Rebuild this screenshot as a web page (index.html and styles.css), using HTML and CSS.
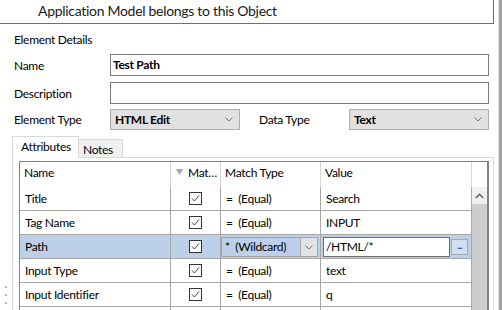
FILE: index.html
```html
<!DOCTYPE html>
<html>
<head>
<meta charset="utf-8">
<link rel="stylesheet" href="styles.css">
</head>
<body>
<div class="window">
  <div class="main">
    <div class="titlebar">Application Model belongs to this Object</div>
    <div class="content">
      <div class="section-title">Element Details</div>
      <div class="form">
        <div class="row">
          <span class="label">Name</span>
          <div class="textbox">Test Path</div>
        </div>
        <div class="row">
          <span class="label">Description</span>
          <div class="textbox"></div>
        </div>
        <div class="row types">
          <span class="label">Element Type</span>
          <div class="combo combo-type"><span>HTML Edit</span><svg class="chev" width="8" height="5" viewBox="0 0 8 5"><polyline points="0.5,0.5 4,4 7.5,0.5" fill="none" stroke="#6d6d6d" stroke-width="1"/></svg></div>
          <span class="label label-dt">Data Type</span>
          <div class="combo combo-dt"><span>Text</span><svg class="chev" width="8" height="5" viewBox="0 0 8 5"><polyline points="0.5,0.5 4,4 7.5,0.5" fill="none" stroke="#6d6d6d" stroke-width="1"/></svg></div>
        </div>
      </div>
      <div class="tabs">
        <div class="tab active">Attributes</div>
        <div class="tab">Notes</div>
      </div>
      <div class="tabpage">
        <div class="grid">
          <div class="ghead">
            <div class="hc c-name">Name</div>
            <div class="hc c-mat"><svg class="filter" width="7" height="6" viewBox="0 0 7 6"><polygon points="0,0 7,0 3.5,6" fill="#a6a6a6"/></svg>Mat…</div>
            <div class="hc c-match">Match Type</div>
            <div class="hc c-val">Value</div>
            <div class="hc c-sb"></div>
          </div>
          <div class="gbody">
            <div class="rows">
              <div class="grow">
                <div class="bc c-name">Title</div>
                <div class="bc c-mat"><span class="check"><svg width="11" height="11" viewBox="0 0 11 11"><polyline points="2,5.5 4.5,8 9,2.5" fill="none" stroke="#444" stroke-width="1"/></svg></span></div>
                <div class="bc c-match">=  (Equal)</div>
                <div class="bc c-val">Search</div>
              </div>
              <div class="grow">
                <div class="bc c-name">Tag Name</div>
                <div class="bc c-mat"><span class="check"><svg width="11" height="11" viewBox="0 0 11 11"><polyline points="2,5.5 4.5,8 9,2.5" fill="none" stroke="#444" stroke-width="1"/></svg></span></div>
                <div class="bc c-match">=  (Equal)</div>
                <div class="bc c-val">INPUT</div>
              </div>
              <div class="grow selected">
                <div class="bc c-name">Path</div>
                <div class="bc c-mat"><span class="check"><svg width="11" height="11" viewBox="0 0 11 11"><polyline points="2,5.5 4.5,8 9,2.5" fill="none" stroke="#444" stroke-width="1"/></svg></span></div>
                <div class="bc c-match edit">
                  <div class="cellcombo"><span class="cc-text">*  (Wildcard)</span><span class="cc-btn"><svg width="8" height="5" viewBox="0 0 8 5"><polyline points="0.5,0.5 4,4 7.5,0.5" fill="none" stroke="#6d6d6d" stroke-width="1"/></svg></span></div>
                </div>
                <div class="bc c-val edit">
                  <div class="celltext">/HTML/*</div>
                  <div class="dots">...</div>
                </div>
              </div>
              <div class="grow">
                <div class="bc c-name">Input Type</div>
                <div class="bc c-mat"><span class="check"><svg width="11" height="11" viewBox="0 0 11 11"><polyline points="2,5.5 4.5,8 9,2.5" fill="none" stroke="#444" stroke-width="1"/></svg></span></div>
                <div class="bc c-match">=  (Equal)</div>
                <div class="bc c-val">text</div>
              </div>
              <div class="grow">
                <div class="bc c-name">Input Identifier</div>
                <div class="bc c-mat"><span class="check"><svg width="11" height="11" viewBox="0 0 11 11"><polyline points="2,5.5 4.5,8 9,2.5" fill="none" stroke="#444" stroke-width="1"/></svg></span></div>
                <div class="bc c-match">=  (Equal)</div>
                <div class="bc c-val">q</div>
              </div>
              <div class="grow">
                <div class="bc c-name"></div>
                <div class="bc c-mat"></div>
                <div class="bc c-match"></div>
                <div class="bc c-val"></div>
              </div>
            </div>
            <div class="scrollbar">
              <div class="sb-up"><svg width="9" height="6" viewBox="0 0 9 6"><polyline points="0.8,5 4.5,1.3 8.2,5" fill="none" stroke="#606060" stroke-width="1.5"/></svg></div>
              <div class="sb-thumb"></div>
            </div>
          </div>
        </div>
      </div>
    </div>
  </div>
  <div class="edge"></div>
  <div class="grip"><i></i><i></i><i></i></div>
</div>
</body>
</html>
```

FILE: styles.css
```css
* { box-sizing: border-box; }
html, body { margin: 0; padding: 0; }
body {
  width: 502px;
  height: 310px;
  overflow: hidden;
  background: #fff;
  color: #000;
  font-family: "Lato", "Open Sans", sans-serif;
  font-size: 12px;
  letter-spacing: -0.3px;
}
.window { display: flex; height: 310px; position: relative; overflow: hidden; }
.main { width: 498px; flex: none; }
.edge { width: 4px; flex: none; border-left: 1px solid #e6e6e6; background: #a2a2a2; }

.titlebar {
  width: 494px;
  height: 24px;
  border-right: 1px solid #6e6e6e;
  border-bottom: 1px solid #6e6e6e;
  padding-left: 38px;
  font-size: 14px;
  letter-spacing: -0.3px;
  line-height: 22px;
  color: #1a1a1a;
  white-space: nowrap;
}
.content { padding-left: 12px; }
.section-title { margin: 8px 0 0 2px; height: 16px; line-height: 16px; }

.form { margin: 6px 0 0 2px; }
.row { display: flex; align-items: center; height: 22px; }
.row + .row { margin-top: 6px; }
.row.types { margin-top: 5px; height: 21px; }
.label { width: 96px; flex: none; }
.textbox {
  width: 379px;
  height: 22px;
  border: 1px solid #7a7a7a;
  padding-left: 2px;
  line-height: 20px;
  font-weight: 700;
}
.combo {
  height: 21px;
  background: #e1e1e1;
  border: 1px solid #adadad;
  display: flex;
  align-items: center;
  justify-content: space-between;
  padding: 0 6px 0 4px;
  font-weight: 700;
}
.combo-type { width: 130px; }
.combo-dt { width: 140px; }
.label-dt { margin-left: 19px; width: 90px; }
.chev { display: block; }

.tabs { display: flex; align-items: flex-end; height: 21px; margin-top: 6px; }
.tab {
  height: 18px;
  width: 44px;
  background: #f0f0f0;
  border: 1px solid #d9d9d9;
  border-left: none;
  border-bottom: none;
  padding-left: 4px;
  line-height: 19px;
}
.tab.active {
  position: relative;
  width: 67px;
  height: 22px;
  margin-bottom: -1px;
  background: #fff;
  border-left: 1px solid #d9d9d9;
  padding-left: 8px;
  line-height: 19px;
}

.tabpage {
  width: 482px;
  height: 153px;
  border: 1px solid #dadada;
  border-bottom: none;
  padding: 3px 4px 0 6px;
  overflow: hidden;
}
.grid {
  width: 470px;
  border: 1px solid #828282;
  border-right-width: 2px;
  border-bottom: none;
}
.ghead { display: flex; height: 25px; }
.hc {
  height: 25px;
  line-height: 22px;
  border-right: 1px solid #d6d6d6;
  padding-left: 4px;
  white-space: nowrap;
  overflow: hidden;
}
.c-name { width: 151px; }
.c-mat { width: 50px; }
.c-match { width: 100px; }
.c-val { width: 151px; }
.c-sb { width: 15px; border-right: none; }
.hc.c-mat { padding-left: 5px; display: flex; align-items: flex-start; }
.filter { margin: 7px 5px 0 0; flex: none; }

.gbody { display: flex; height: 124px; overflow: hidden; }
.rows { width: 452px; }
.grow { display: flex; height: 24px; }
.bc {
  height: 24px;
  border-right: 1px solid #a8a8a8;
  border-bottom: 1px solid #a8a8a8;
  padding-left: 5px;
  line-height: 23px;
  white-space: pre;
  overflow: hidden;
}
.bc.c-mat { display: flex; align-items: center; justify-content: center; padding-left: 0; }
.check {
  width: 13px;
  height: 13px;
  border: 1px solid #333;
  background: #fff;
  display: flex;
  align-items: center;
  justify-content: center;
}
.check svg { display: block; }
.grow.selected .bc { background: #bcd0ea; }
.bc.edit { padding-left: 0; display: flex; align-items: flex-start; }
.cellcombo {
  margin-top: 2px;
  width: 97px;
  height: 20px;
  border: 1px solid #a3a3a3;
  display: flex;
}
.cc-text { flex: 1; padding-left: 3px; line-height: 18px; }
.cc-btn {
  width: 17px;
  height: 18px;
  background: #e3e3e3;
  border-left: 1px solid #acacac;
  display: flex;
  align-items: center;
  justify-content: center;
}
.celltext {
  margin: 2px 0 0 2px;
  width: 127px;
  height: 20px;
  background: #fff;
  border: 1px solid #6e6e6e;
  padding-left: 2px;
  line-height: 18px;
}
.dots {
  margin: 4px 0 0 1px;
  width: 17px;
  height: 16px;
  background: #d3deef;
  border: 1px solid #a8a8a8;
  color: #244a8a;
  font-size: 10px;
  font-weight: 700;
  line-height: 11px;
  text-align: center;
  letter-spacing: -1px;
}
.scrollbar { width: 15px; display: flex; flex-direction: column; height: 124px; }
.sb-up {
  height: 17px;
  background: #f0f0f0;
  display: flex;
  align-items: center;
  justify-content: center;
}
.sb-up svg { display: block; }
.sb-thumb { flex: 1; background: #cdcdcd; }

.grip { position: absolute; left: 5px; top: 286px; display: flex; flex-direction: column; gap: 6px; }
.grip i { display: block; width: 2px; height: 2px; background: #b5b5b5; }
```
